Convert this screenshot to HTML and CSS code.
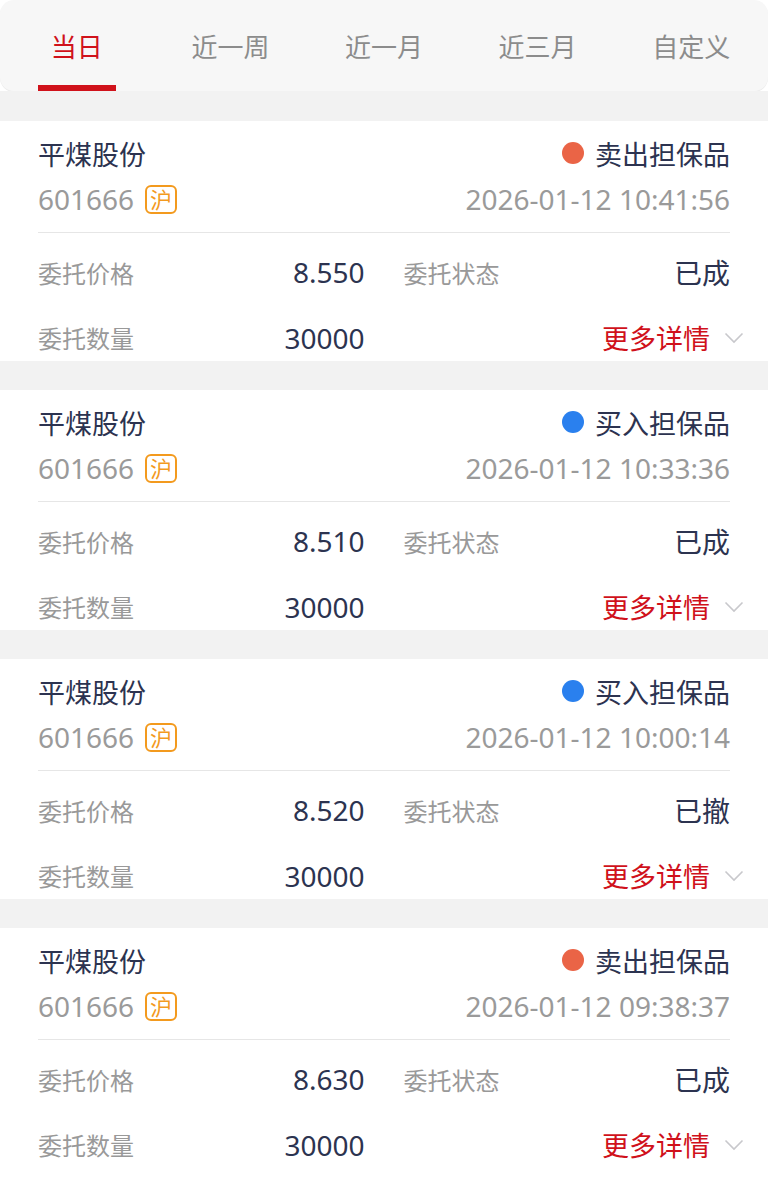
FILE: index.html
```html
<!DOCTYPE html>
<html lang="zh-CN">
<head>
    <meta charset="UTF-8">
    <meta name="viewport" content="width=device-width, initial-scale=1.0">
    <title>委托查询</title>
    <link rel="stylesheet" href="styles.css">
</head>
<body>

<nav class="tabs">
    <div class="tab active">当日</div>
    <div class="tab">近一周</div>
    <div class="tab">近一月</div>
    <div class="tab">近三月</div>
    <div class="tab">自定义</div>
</nav>

<div class="list">
    <div class="card">
        <div class="head">
            <div class="name">平煤股份</div>
            <div class="side"><span class="dot sell"></span>卖出担保品</div>
            <div class="code">601666<span class="badge">沪</span></div>
            <div class="time">2026-01-12 10:41:56</div>
        </div>
        <div class="info">
            <div class="cell"><span class="label">委托价格</span><span class="value">8.550</span></div>
            <div class="cell"><span class="label">委托状态</span><span class="value">已成</span></div>
            <div class="cell"><span class="label">委托数量</span><span class="value">30000</span></div>
            <div class="cell"><span></span><span class="more">更多详情<svg width="20" height="12" viewBox="0 0 20 12"><path d="M1.5 1.5 L10 10 L18.5 1.5" fill="none" stroke="#c8c8cc" stroke-width="1.6"/></svg></span></div>
        </div>
    </div>

    <div class="card">
        <div class="head">
            <div class="name">平煤股份</div>
            <div class="side"><span class="dot buy"></span>买入担保品</div>
            <div class="code">601666<span class="badge">沪</span></div>
            <div class="time">2026-01-12 10:33:36</div>
        </div>
        <div class="info">
            <div class="cell"><span class="label">委托价格</span><span class="value">8.510</span></div>
            <div class="cell"><span class="label">委托状态</span><span class="value">已成</span></div>
            <div class="cell"><span class="label">委托数量</span><span class="value">30000</span></div>
            <div class="cell"><span></span><span class="more">更多详情<svg width="20" height="12" viewBox="0 0 20 12"><path d="M1.5 1.5 L10 10 L18.5 1.5" fill="none" stroke="#c8c8cc" stroke-width="1.6"/></svg></span></div>
        </div>
    </div>

    <div class="card">
        <div class="head">
            <div class="name">平煤股份</div>
            <div class="side"><span class="dot buy"></span>买入担保品</div>
            <div class="code">601666<span class="badge">沪</span></div>
            <div class="time">2026-01-12 10:00:14</div>
        </div>
        <div class="info">
            <div class="cell"><span class="label">委托价格</span><span class="value">8.520</span></div>
            <div class="cell"><span class="label">委托状态</span><span class="value">已撤</span></div>
            <div class="cell"><span class="label">委托数量</span><span class="value">30000</span></div>
            <div class="cell"><span></span><span class="more">更多详情<svg width="20" height="12" viewBox="0 0 20 12"><path d="M1.5 1.5 L10 10 L18.5 1.5" fill="none" stroke="#c8c8cc" stroke-width="1.6"/></svg></span></div>
        </div>
    </div>

    <div class="card">
        <div class="head">
            <div class="name">平煤股份</div>
            <div class="side"><span class="dot sell"></span>卖出担保品</div>
            <div class="code">601666<span class="badge">沪</span></div>
            <div class="time">2026-01-12 09:38:37</div>
        </div>
        <div class="info">
            <div class="cell"><span class="label">委托价格</span><span class="value">8.630</span></div>
            <div class="cell"><span class="label">委托状态</span><span class="value">已成</span></div>
            <div class="cell"><span class="label">委托数量</span><span class="value">30000</span></div>
            <div class="cell"><span></span><span class="more">更多详情<svg width="20" height="12" viewBox="0 0 20 12"><path d="M1.5 1.5 L10 10 L18.5 1.5" fill="none" stroke="#c8c8cc" stroke-width="1.6"/></svg></span></div>
        </div>
    </div>
</div>

</body>
</html>
```

FILE: styles.css
```css
body {
    margin: 0;
    background-color: #ffffff;
    font-family: "Noto Sans", "Noto Sans CJK SC", sans-serif;
    color: #2c3350;
}
.tabs {
    display: grid;
    grid-template-columns: repeat(5, 1fr);
    height: 91px;
    background-color: #f7f7f7;
    border-radius: 14px;
    box-shadow: 0 1px 0 #ececec;
}
.tab {
    display: flex;
    justify-content: center;
    align-items: center;
    font-size: 26px;
    color: #8c8c8c;
}
.tab.active {
    color: #d0121b;
    position: relative;
}
.tab.active::after {
    content: "";
    position: absolute;
    left: 38px;
    width: 78px;
    bottom: 0;
    height: 6px;
    background-color: #d0121b;
}
.list {
    background-color: #f2f2f2;
    padding-top: 30px;
}
.card {
    background-color: #ffffff;
    height: 240px;
    margin-bottom: 29px;
    padding: 9px 38px 0;
    box-sizing: border-box;
}
.head {
    display: grid;
    grid-template-columns: 1fr auto;
    grid-auto-rows: 46px;
    align-items: center;
    padding-bottom: 10px;
    border-bottom: 1px solid #e6e6e6;
}
.name {
    font-size: 27px;
}
.side {
    display: flex;
    align-items: center;
    justify-self: end;
    font-size: 27px;
}
.dot {
    width: 22px;
    height: 22px;
    border-radius: 50%;
    margin-right: 11px;
}
.dot.sell {
    background-color: #ea6446;
}
.dot.buy {
    background-color: #2a80ee;
}
.code {
    display: flex;
    align-items: center;
    font-size: 28px;
    color: #9a9a9a;
}
.badge {
    display: inline-flex;
    justify-content: center;
    align-items: center;
    width: 32px;
    height: 29px;
    box-sizing: border-box;
    margin-left: 11px;
    border: 2px solid #f39a1e;
    border-radius: 6px;
    color: #f39a1e;
    font-size: 22px;
    line-height: 1;
}
.time {
    font-size: 28px;
    color: #9a9a9a;
    text-align: right;
}
.info {
    display: grid;
    grid-template-columns: 1fr 1fr;
    column-gap: 39px;
    grid-template-rows: 48px 47px;
    row-gap: 18px;
    padding-top: 15px;
}
.cell {
    display: flex;
    justify-content: space-between;
    align-items: center;
}
.label {
    font-size: 24px;
    color: #999999;
}
.value {
    font-size: 28px;
}
.more {
    display: flex;
    align-items: center;
    gap: 14px;
    margin-right: -14px;
    font-size: 27px;
    color: #d0111b;
}
```
